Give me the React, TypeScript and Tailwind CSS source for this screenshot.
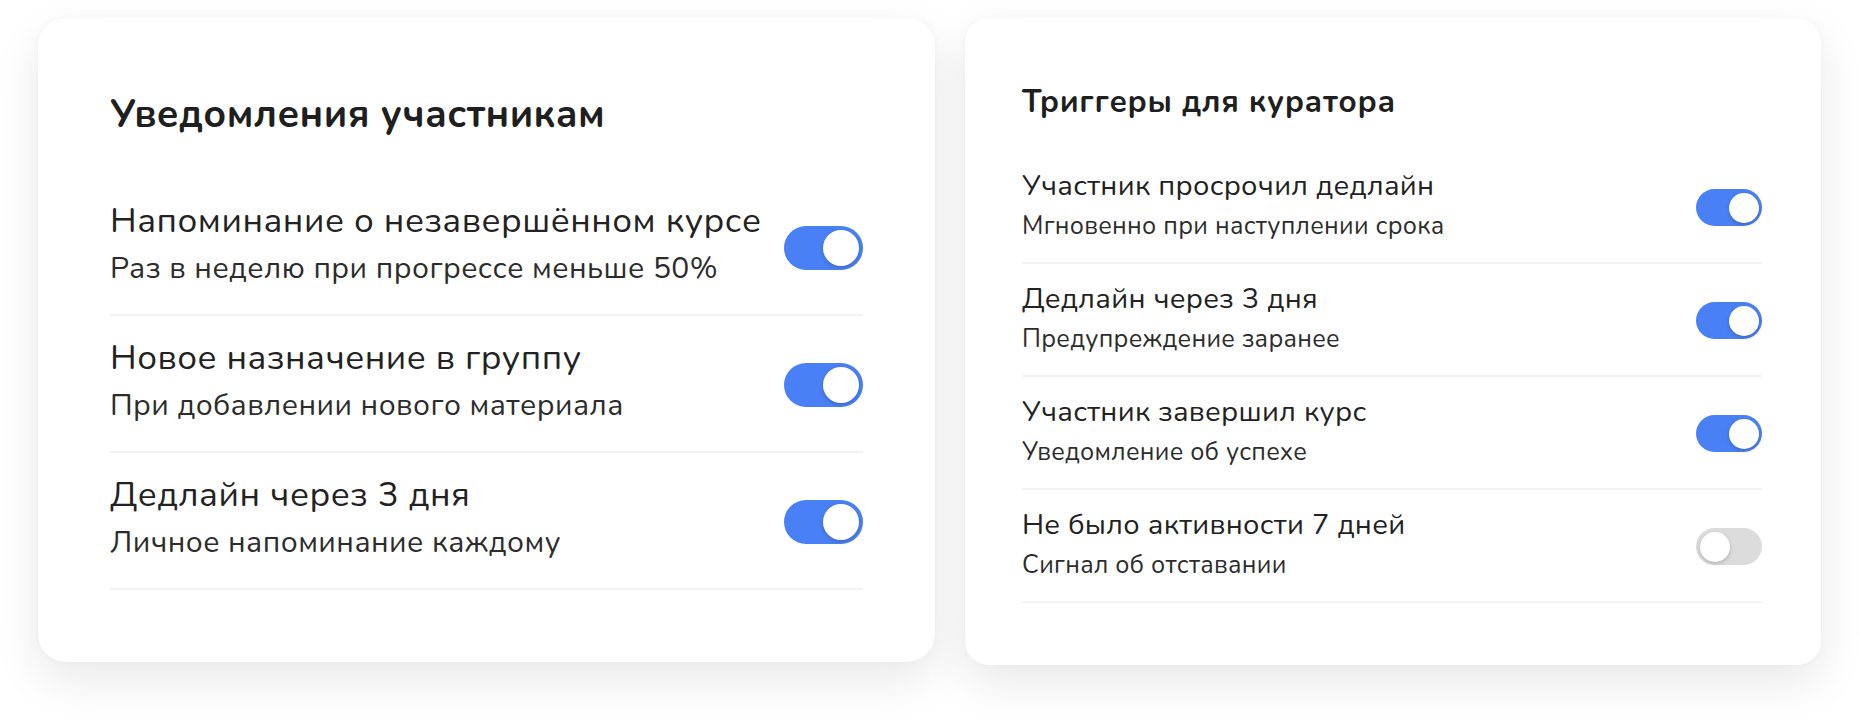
import React, { useState } from "react";

type Item = { title: string; hint: string; on: boolean };

const participantItems: Item[] = [
  { title: "Напоминание о незавершённом курсе", hint: "Раз в неделю при прогрессе меньше 50%", on: true },
  { title: "Новое назначение в группу", hint: "При добавлении нового материала", on: true },
  { title: "Дедлайн через 3 дня", hint: "Личное напоминание каждому", on: true },
];

const curatorItems: Item[] = [
  { title: "Участник просрочил дедлайн", hint: "Мгновенно при наступлении срока", on: true },
  { title: "Дедлайн через 3 дня", hint: "Предупреждение заранее", on: true },
  { title: "Участник завершил курс", hint: "Уведомление об успехе", on: true },
  { title: "Не было активности 7 дней", hint: "Сигнал об отставании", on: false },
];

function BigSwitch({ on, onToggle }: { on: boolean; onToggle: () => void }) {
  return (
    <button
      type="button"
      onClick={onToggle}
      className={`relative mt-[9px] h-[44px] w-[79px] shrink-0 rounded-full transition-colors ${
        on ? "bg-[#4a80f6]" : "bg-[#dedede]"
      }`}
    >
      <span
        className={`absolute top-[4px] h-[36px] w-[36px] rounded-full bg-white shadow-[0_2px_4px_rgba(0,0,0,0.18)] transition-all ${
          on ? "left-[39px]" : "left-[4px]"
        }`}
      />
    </button>
  );
}

function SmallSwitch({ on, onToggle }: { on: boolean; onToggle: () => void }) {
  return (
    <button
      type="button"
      onClick={onToggle}
      className={`relative mt-[5px] h-[37px] w-[66px] shrink-0 rounded-full transition-colors ${
        on ? "bg-[#4a80f6]" : "bg-[#dcdcdc]"
      }`}
    >
      <span
        className={`absolute top-[3.5px] h-[30px] w-[30px] rounded-full bg-white shadow-[0_2px_4px_rgba(0,0,0,0.18)] transition-all ${
          on ? "left-[32.5px]" : "left-[3.5px]"
        }`}
      />
    </button>
  );
}

function ParticipantsCard() {
  const [items, setItems] = useState(participantItems);
  const flip = (i: number) =>
    setItems((prev) => prev.map((it, j) => (j === i ? { ...it, on: !it.on } : it)));
  return (
    <section className="w-[897px] rounded-[28px] bg-white pl-[72px] pr-[72px] pt-[75px] pb-[72px] shadow-[0_18px_48px_rgba(0,0,0,0.09),0_0_6px_rgba(0,0,0,0.03)]">
      <h2 className="mb-[42px] text-[39px] font-bold leading-[44px] tracking-[0.01em] text-[#1f1f1f]">
        Уведомления участникам
      </h2>
      <ul>
        {items.map((it, i) => (
          <li
            key={it.title}
            className="flex items-center justify-between border-b-2 border-[#f1f2f6] pt-[20px] pb-[26px]"
          >
            <div>
              <div className="text-[35px] leading-[44px] tracking-[0.015em] text-[#222222]">{it.title}</div>
              <div className="mt-[7px] text-[30px] leading-[38px] tracking-[0.015em] text-[#2c2c2c]">
                {it.hint}
              </div>
            </div>
            <BigSwitch on={it.on} onToggle={() => flip(i)} />
          </li>
        ))}
      </ul>
    </section>
  );
}

function CuratorCard() {
  const [items, setItems] = useState(curatorItems);
  const flip = (i: number) =>
    setItems((prev) => prev.map((it, j) => (j === i ? { ...it, on: !it.on } : it)));
  return (
    <section className="w-[856px] rounded-[24px] bg-white pl-[57px] pr-[59px] pt-[65px] pb-[62px] shadow-[0_18px_48px_rgba(0,0,0,0.09),0_0_6px_rgba(0,0,0,0.03)]">
      <h2 className="mb-[30px] text-[31.5px] font-bold leading-[38px] tracking-[0.02em] text-[#1f1f1f]">
        Триггеры для куратора
      </h2>
      <ul>
        {items.map((it, i) => (
          <li
            key={it.title + i}
            className="flex items-center justify-between border-b-2 border-[#f1f2f6] pt-[17px] pb-[20px]"
          >
            <div>
              <div className="text-[29px] leading-[36px] tracking-[0.01em] text-[#222222]">{it.title}</div>
              <div className="mt-[6px] text-[25px] leading-[32px] tracking-[0.012em] text-[#2c2c2c]">
                {it.hint}
              </div>
            </div>
            <SmallSwitch on={it.on} onToggle={() => flip(i)} />
          </li>
        ))}
      </ul>
    </section>
  );
}

export default function App() {
  return (
    <div
      className="flex min-h-[725px] items-start gap-[30px] bg-white pl-[38px] pt-[18px]"
      style={{ fontFamily: "'Nunito', 'Open Sans', 'Noto Sans', sans-serif" }}
    >
      <ParticipantsCard />
      <CuratorCard />
    </div>
  );
}
